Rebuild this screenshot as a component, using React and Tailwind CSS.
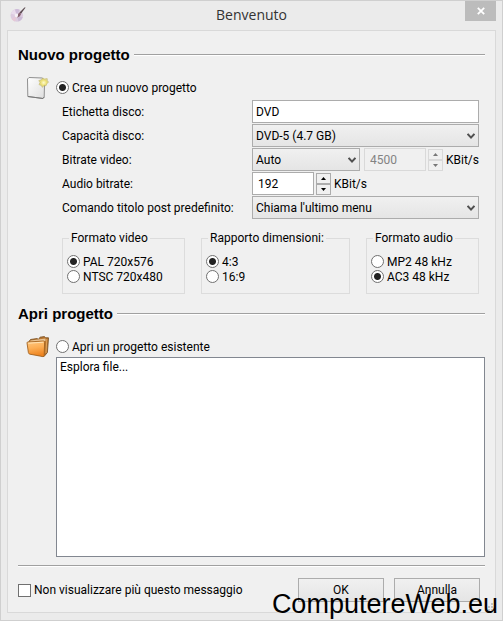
import { useState } from "react";

function SectionTitle({ children }) {
  return (
    <div className="flex items-center gap-1">
      <h2 className="font-['Liberation_Sans',sans-serif] text-[15px] leading-5 font-bold text-black">{children}</h2>
      <div className="h-0.5 flex-1 border-t border-[#a0a0a0] bg-white" />
    </div>
  );
}

function Radio({ name, label, checked, onChange }) {
  return (
    <label className="flex h-[15px] items-center gap-[3px] whitespace-nowrap">
      <input
        type="radio"
        name={name}
        checked={checked}
        onChange={onChange}
        className="size-[13px] shrink-0 appearance-none rounded-full border border-[#707070] bg-white checked:bg-[radial-gradient(circle,#222_0_3px,#fff_4px)]"
      />
      {label}
    </label>
  );
}

function RadioGroup({ title, name, options, initial }) {
  const [value, setValue] = useState(initial);

  return (
    <fieldset className="h-16 min-w-0 border border-[#dcdcdc] pl-1">
      <legend className="ml-0.5 px-0.5 leading-4 whitespace-nowrap">{title}</legend>
      <div className="mt-2">
        {options.map((option) => (
          <Radio
            key={option}
            name={name}
            label={option}
            checked={value === option}
            onChange={() => setValue(option)}
          />
        ))}
      </div>
    </fieldset>
  );
}

function Select({ id, options, className }) {
  return (
    <div className={`relative ${className}`}>
      <select
        id={id}
        className="h-[23px] w-full appearance-none border border-[#acacac] bg-linear-to-b from-[#f0f0f0] to-[#e5e5e5] pl-[3px] leading-5"
      >
        {options.map((option) => (
          <option key={option}>{option}</option>
        ))}
      </select>
      <svg viewBox="0 0 8 7" className="pointer-events-none absolute top-[9px] right-1 h-[7px] w-2">
        <path d="M0.6 0.8 L4 4.6 L7.4 0.8" fill="none" stroke="#505050" strokeWidth="2" />
      </svg>
    </div>
  );
}

function Spinner({ id, label, initial, disabled, className }) {
  const [value, setValue] = useState(initial);
  const buttonClass =
    "flex h-[11px] w-[15px] items-center justify-center border border-[#acacac] bg-[#f0f0f0] disabled:border-[#d9d9d9]";

  return (
    <>
      <input
        id={id}
        type="text"
        aria-label={label}
        value={value}
        disabled={disabled}
        onChange={(e) => setValue(Number(e.target.value) || 0)}
        className={`h-[23px] min-w-0 border border-[#acacac] bg-white pl-[5px] disabled:border-[#d9d9d9] disabled:bg-[#f0f0f0] disabled:text-[#838383] ${className}`}
      />
      <div className="ml-0.5 flex w-[15px] shrink-0 flex-col">
        <button type="button" aria-label="+" disabled={disabled} onClick={() => setValue(value + 1)} className={buttonClass}>
          <svg viewBox="0 0 5 3" className={disabled ? "h-[3px] w-[5px] fill-[#777]" : "h-[3px] w-[5px] fill-black"}>
            <path d="M2.5 0 L5 3 H0 Z" />
          </svg>
        </button>
        <button type="button" aria-label="-" disabled={disabled} onClick={() => setValue(value - 1)} className={buttonClass}>
          <svg viewBox="0 0 5 3" className={disabled ? "h-[3px] w-[5px] fill-[#777]" : "h-[3px] w-[5px] fill-black"}>
            <path d="M0 0 H5 L2.5 3 Z" />
          </svg>
        </button>
      </div>
      <span className="ml-[3px] whitespace-nowrap">KBit/s</span>
    </>
  );
}

function DiscIcon() {
  return (
    <svg viewBox="0 0 16 16" className="size-4">
      <circle cx="6.8" cy="8.4" r="6.3" fill="#dccbdf" />
      <path d="M6.8 8.4 L0.8 6.4 A6.3 6.3 0 0 1 5 2.4 Z" fill="#e9dcec" />
      <path d="M6.8 8.4 L5 2.4 A6.3 6.3 0 0 1 9.5 2.7 Z" fill="#cdbbd8" />
      <path d="M6.8 8.4 L12.8 10.2 A6.3 6.3 0 0 1 8.6 14.4 Z" fill="#cbbbd6" />
      <path d="M6.8 8.4 L1.6 12 A6.3 6.3 0 0 0 5 14.4 Z" fill="#e6c8d6" />
      <circle cx="6.8" cy="8.4" r="2" fill="#f6f1f6" />
      <path d="M15.6 0.6 L14.4 0.4 L9.6 5.6 L11 6.8 Z" fill="#5a4a50" />
      <path d="M9.6 5.6 L11 6.8 Q10.8 9.6 6.6 10.8 Q8.6 9 8 7.4 Q8.4 6 9.6 5.6 Z" fill="#84606e" />
    </svg>
  );
}

function NewFileIcon() {
  return (
    <svg viewBox="0 0 24 24" className="size-6">
      <defs>
        <linearGradient id="paper" x1="0" y1="0" x2="1" y2="1">
          <stop offset="0" stopColor="#fff" />
          <stop offset="1" stopColor="#dedede" />
        </linearGradient>
        <radialGradient id="glow">
          <stop offset="0" stopColor="#fffbd0" />
          <stop offset="0.6" stopColor="#ebdf72" />
          <stop offset="1" stopColor="#cfc47a" stopOpacity="0.6" />
        </radialGradient>
      </defs>
      <path d="M1.5 3 L3 1.5 L16.5 2 L18.5 8 L18.2 21 L17 22.5 L1.8 20.5 Z" fill="url(#paper)" stroke="#909090" />
      <path d="M2 20.5 L17 22.5 L18.2 21" fill="none" stroke="#777" />
      <path
        d="M16.8 2 L18.6 3 L21.2 2.6 L21.4 4.8 L22.6 6.2 L20.8 7.6 L20 9.8 L18 9.4 L16.4 11.4 L15.2 9.4 L13 8.6 L14 6.6 L12.8 4.6 L15.2 3.8 Z"
        fill="url(#glow)"
        stroke="#c4b964"
        strokeWidth="0.6"
      />
    </svg>
  );
}

function FolderIcon() {
  return (
    <svg viewBox="0 0 24 24" className="size-6">
      <defs>
        <linearGradient id="folder" x1="0" y1="0" x2="0.2" y2="1">
          <stop offset="0" stopColor="#ffc983" />
          <stop offset="0.5" stopColor="#fcae55" />
          <stop offset="1" stopColor="#ee8420" />
        </linearGradient>
      </defs>
      <path d="M3 6.5 L4.5 4.5 L11 3.6 L12.5 4.4 L14 2.2 L18.5 1.6 L19.5 2.8 L22.5 2.8 L21.4 17.5 L18 21.5 L5 18 Z" fill="#b9762f" stroke="#7e5427" strokeWidth="0.9" />
      <path d="M4.5 5.6 L19.5 3.4 L19.5 6 L4 8 Z" fill="#e8c394" />
      <path d="M20.8 4 L20 18" stroke="#e5a75c" strokeWidth="0.9" fill="none" />
      <path d="M1 7.8 Q1 7 2 7 L17.4 6 Q18.6 6 18.6 7.2 L18.2 20.4 Q18.2 21.8 16.8 21.6 L4 19.2 Q2.6 19 2.4 17.6 Z" fill="url(#folder)" stroke="#a3621f" strokeWidth="0.9" />
      <path d="M2.2 8.2 L17.4 7.2" stroke="#ffe3b5" fill="none" />
    </svg>
  );
}

export default function App() {
  const [mode, setMode] = useState("new");
  const [label, setLabel] = useState("DVD");
  const [hide, setHide] = useState(false);

  return (
    <div className="relative flex min-h-screen flex-col border border-[#cfcfcf] bg-[#ebebeb] px-1.5 pb-[7px] font-[Roboto,'Open_Sans',sans-serif] text-[12px] leading-4 text-black">
      {/* Title bar */}
      <header className="flex h-[29px] items-start justify-between">
        <div className="w-[31px] pt-1.5 pl-[3px]">
          <DiscIcon />
        </div>
        <h1 className="pt-1 font-['Open_Sans',sans-serif] text-[14px] leading-5 text-[#333]">Benvenuto</h1>
        <button type="button" aria-label="Chiudi" className="flex h-5 w-[31px] items-center justify-center bg-[#bcbcbc]">
          <svg viewBox="0 0 8 8" className="size-2">
            <path d="M0.8 0.8 L7.2 7.2 M7.2 0.8 L0.8 7.2" stroke="#fff" strokeWidth="1.8" />
          </svg>
        </button>
      </header>

      <main className="flex flex-1 flex-col border border-[#d9d9d9] bg-[#f0f0f0] px-2.5 pt-3.5">
        <SectionTitle>Nuovo progetto</SectionTitle>

        <div className="mt-[11px] flex">
          <div className="w-[38px] shrink-0 pl-2">
            <NewFileIcon />
          </div>
          <div className="min-w-0 flex-1 pt-1">
            <Radio name="mode" label="Crea un nuovo progetto" checked={mode === "new"} onChange={() => setMode("new")} />

            <div className="mx-1.5 mt-[5px] grid grid-cols-[190px_1fr] items-center gap-y-px">
              <label htmlFor="disc-label">Etichetta disco:</label>
              <input
                id="disc-label"
                type="text"
                value={label}
                onChange={(e) => setLabel(e.target.value)}
                className="h-[23px] w-full border border-[#acacac] bg-white px-[3px]"
              />

              <label htmlFor="capacity">Capacità disco:</label>
              <Select id="capacity" options={["DVD-5 (4.7 GB)", "DVD-9 (8.5 GB)"]} className="w-full" />

              <label htmlFor="video-bitrate">Bitrate video:</label>
              <div className="flex items-center">
                <Select id="video-bitrate" options={["Auto"]} className="mr-1 flex-1" />
                <Spinner label="Bitrate video" initial={4500} disabled className="w-[62px]" />
              </div>

              <label htmlFor="audio-bitrate">Audio bitrate:</label>
              <div className="flex items-center">
                <Spinner id="audio-bitrate" initial={192} className="w-[62px]" />
              </div>

              <label htmlFor="command" className="whitespace-nowrap">
                Comando titolo post predefinito:
              </label>
              <Select id="command" options={["Chiama l'ultimo menu"]} className="w-full" />
            </div>

            <div className="mx-1.5 mt-[11px] grid grid-cols-[123fr_149fr_113fr] gap-4">
              <RadioGroup title="Formato video" name="video" options={["PAL 720x576", "NTSC 720x480"]} initial="PAL 720x576" />
              <RadioGroup title="Rapporto dimensioni:" name="aspect" options={["4:3", "16:9"]} initial="4:3" />
              <RadioGroup title="Formato audio" name="audio" options={["MP2 48 kHz", "AC3 48 kHz"]} initial="AC3 48 kHz" />
            </div>
          </div>
        </div>

        <div className="mt-2.5">
          <SectionTitle>Apri progetto</SectionTitle>
        </div>

        <div className="mt-[11px] flex flex-1">
          <div className="w-[38px] shrink-0 pl-2">
            <FolderIcon />
          </div>
          <div className="flex min-w-0 flex-1 flex-col pt-1">
            <Radio name="mode" label="Apri un progetto esistente" checked={mode === "open"} onChange={() => setMode("open")} />
            <ul className="mt-[3px] min-h-24 flex-1 border border-[#828790] bg-white px-[3px] py-px">
              <li>Esplora file...</li>
            </ul>
          </div>
        </div>

        <div className="mt-2 h-0.5 border-t border-[#a0a0a0] bg-white" />

        <footer className="mt-[11px] mb-2.5 flex items-center justify-between pr-[5px]">
          <label className="flex items-center gap-[3px] whitespace-nowrap">
            <input
              type="checkbox"
              checked={hide}
              onChange={(e) => setHide(e.target.checked)}
              className="size-[13px] shrink-0 appearance-none border border-[#707070] bg-white checked:bg-[#444]"
            />
            Non visualizzare più questo messaggio
          </label>
          <div className="flex gap-2.5">
            <button type="button" className="h-6 w-[86px] border border-[#acacac] bg-linear-to-b from-[#f0f0f0] to-[#e5e5e5]">
              OK
            </button>
            <button type="button" className="h-6 w-[86px] border border-[#acacac] bg-linear-to-b from-[#f0f0f0] to-[#e5e5e5]">
              Annulla
            </button>
          </div>
        </footer>
      </main>

      {/* Resize grip */}
      <svg viewBox="0 0 9 9" className="absolute right-2 bottom-2 size-[9px] fill-[#c4c4c4]">
        <path d="M6 0h2v2h-2z M6 3h2v2h-2z M3 3h2v2h-2z M6 6h2v2h-2z M3 6h2v2h-2z M0 6h2v2h-2z" />
      </svg>

      {/* Watermark */}
      <div className="pointer-events-none absolute right-1 bottom-0 font-['Liberation_Sans',sans-serif] text-[27px] leading-8">
        ComputereWeb.eu
      </div>
    </div>
  );
}
